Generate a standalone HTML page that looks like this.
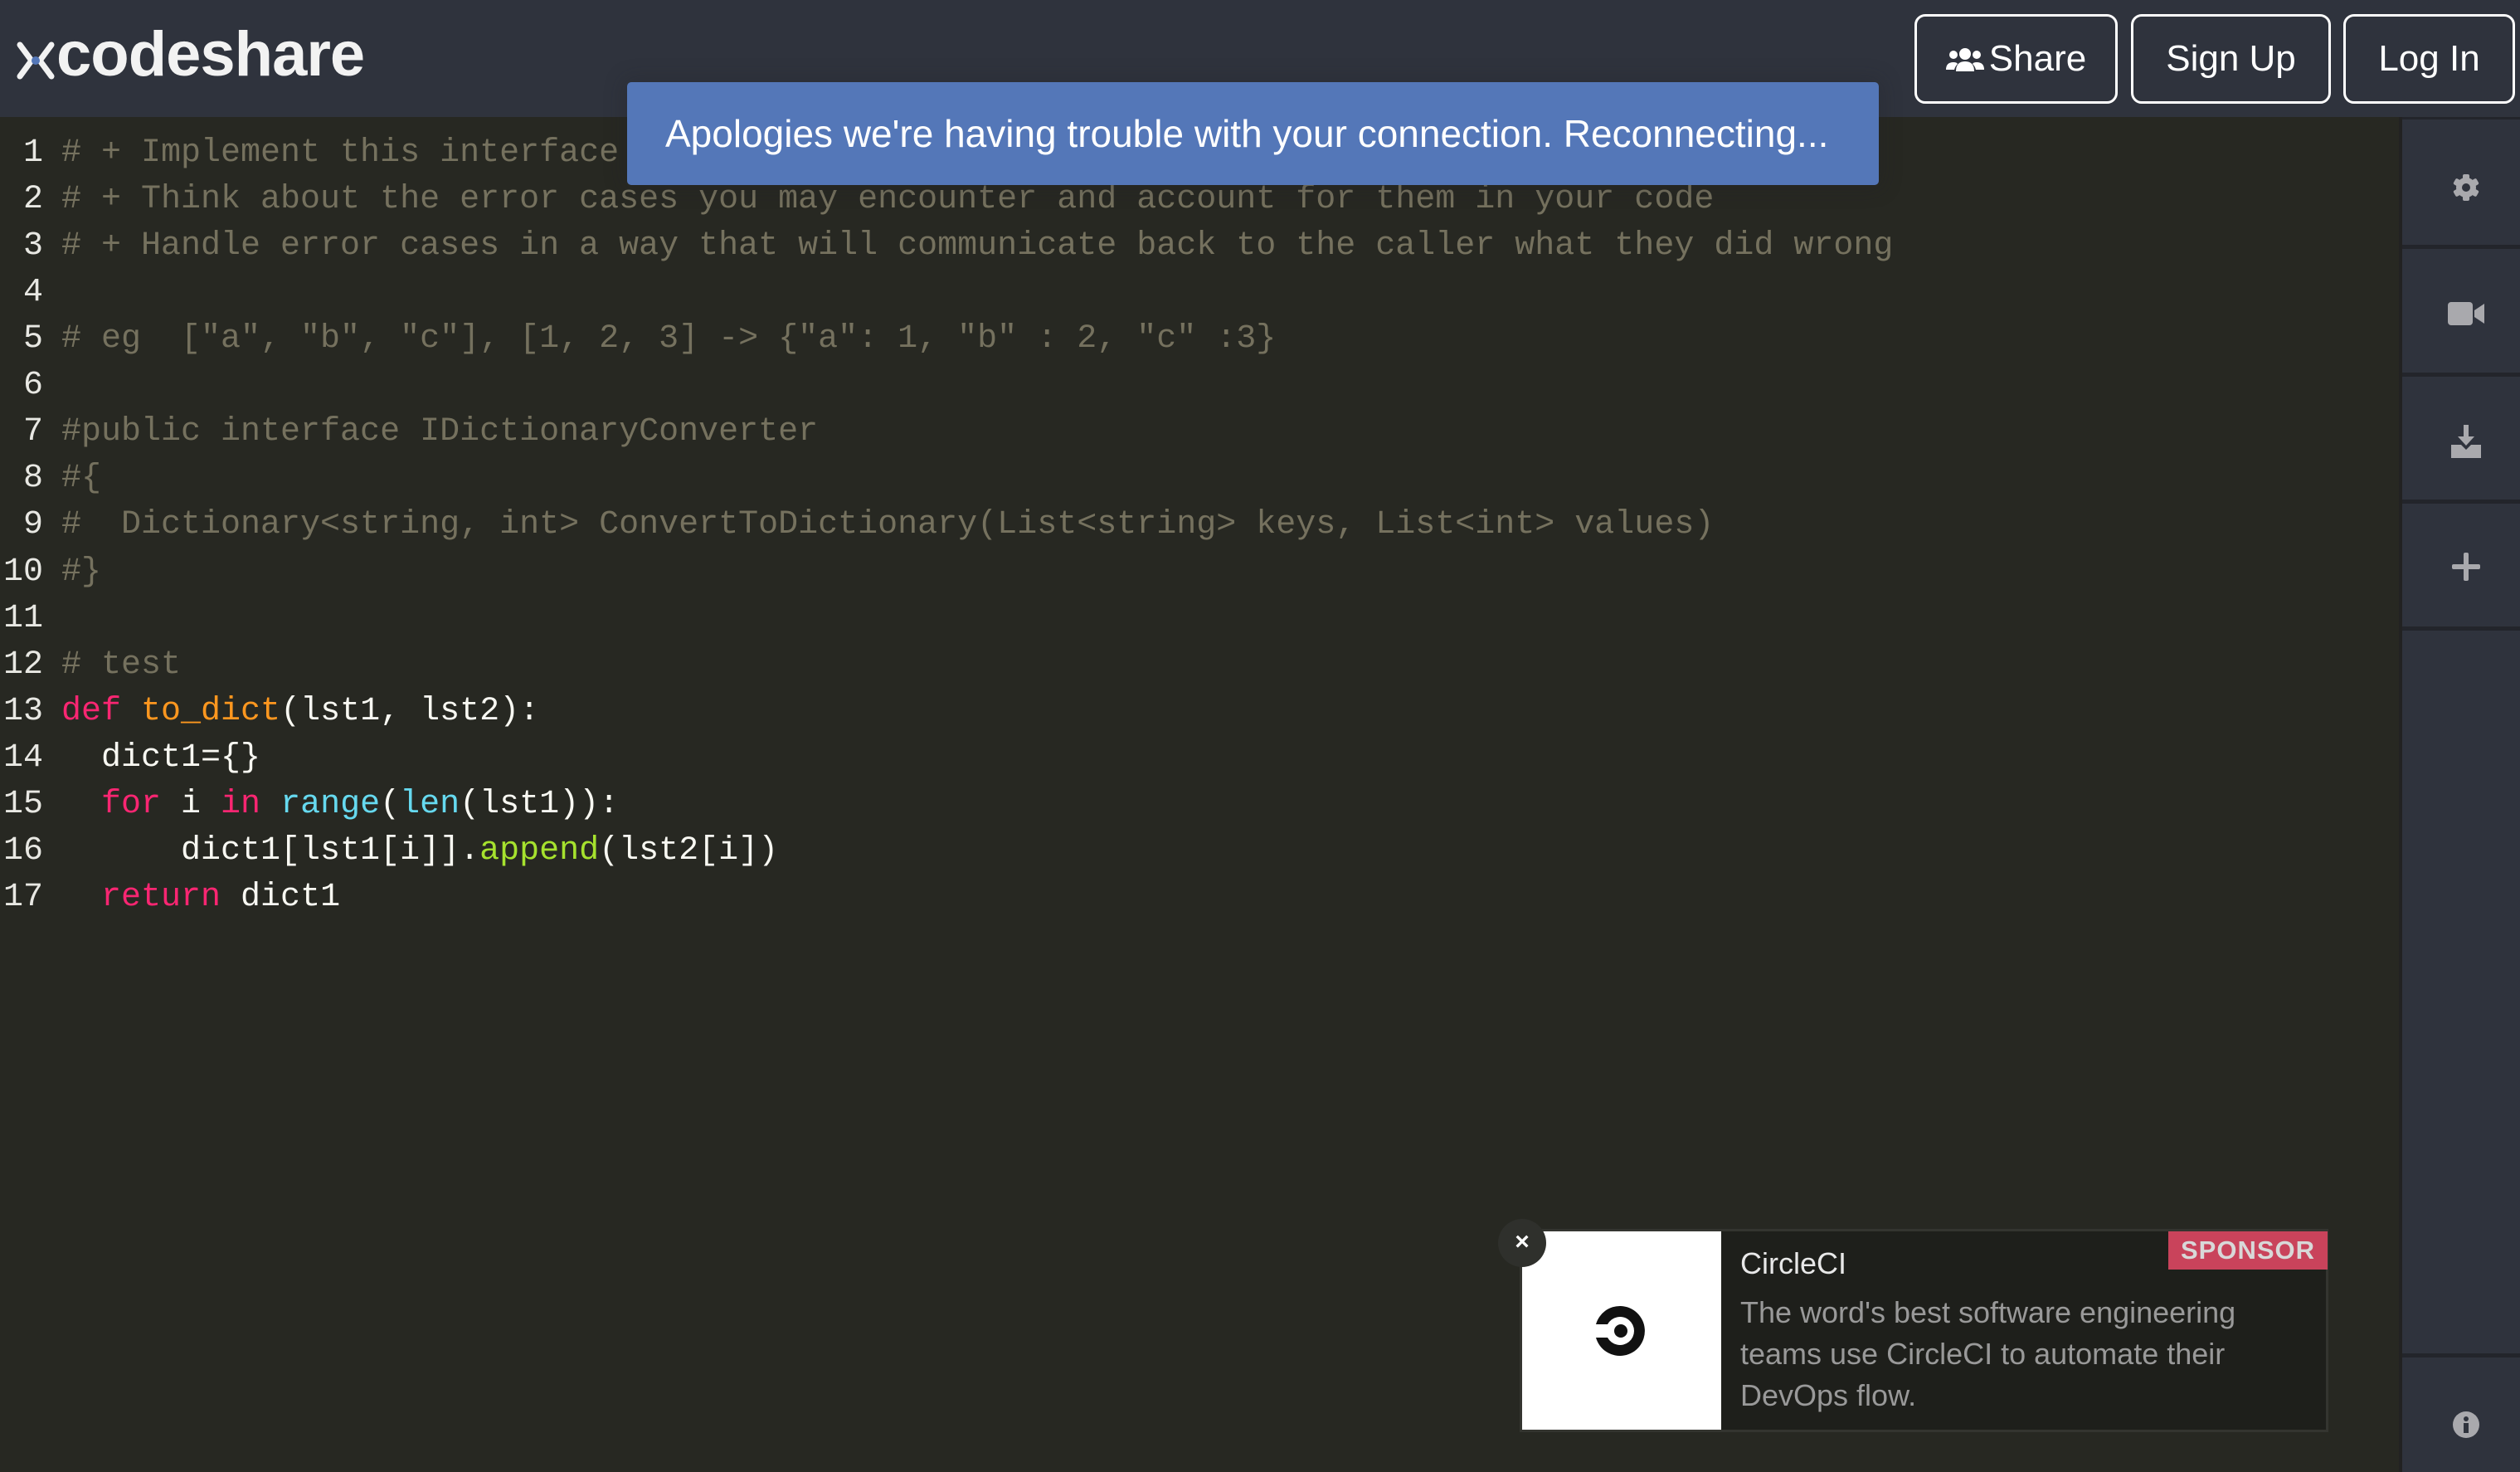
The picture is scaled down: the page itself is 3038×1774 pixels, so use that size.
<!DOCTYPE html>
<html><head><meta charset="utf-8"><style>
*{margin:0;padding:0;box-sizing:border-box}
body{width:3038px;height:1774px;overflow:hidden;background:#272822;position:relative;font-family:"Liberation Sans",sans-serif}
.hdr{position:absolute;left:0;top:0;width:3038px;height:141px;background:#2f333d}
.logo{position:absolute;left:68px;top:22px;font-size:76px;font-weight:bold;color:#f2f2f2;letter-spacing:-1px}
.btn{position:absolute;top:17px;height:108px;border:3px solid #fff;border-radius:13px;color:#fff;font-size:44px;display:flex;align-items:center;justify-content:center}
.alert{position:absolute;left:756px;top:99px;width:1509px;height:124px;background:#5477b8;border-radius:5px;color:#fff;font-size:46px;padding-left:46px;line-height:124px;box-shadow:0 0 24px 4px rgba(30,30,40,.25);z-index:5}
.code{position:absolute;left:0;top:12px;font-family:"Liberation Mono",monospace;font-size:40px;white-space:pre}
.ln{position:absolute;width:52px;text-align:right;left:0;color:#e8e8e3}
.tx{position:absolute;left:74px;color:#f8f8f2}
.c{color:#75715e}.k{color:#f92672}.f{color:#fd971f}.b{color:#66d9ef}.g{color:#a6e22e}
.side{position:absolute;left:2896px;top:141px;width:142px;height:1633px;background:#2f333d}
.sep{position:absolute;left:2896px;width:142px;height:5px;background:#23252b}
.ico{position:absolute;left:2942px;width:62px;display:flex;justify-content:center}
</style></head><body>
<div class="hdr"></div>
<svg style="position:absolute;left:20px;top:50px" width="46" height="46" viewBox="0 0 46 46"><path d="M4 4 L18 23 L4 42 M42 4 L28 23 L42 42" stroke="#f2f2f2" stroke-width="7" fill="none" stroke-linecap="round"/><circle cx="23" cy="23" r="5" fill="#5477b8"/></svg>
<div class="logo">codeshare</div>
<div class="btn" style="left:2308px;width:245px"><svg width="46" height="30" viewBox="0 0 46 30" style="margin-right:6px"><circle cx="23" cy="9" r="7" fill="#fff"/><circle cx="9" cy="10" r="5" fill="#fff"/><circle cx="37" cy="10" r="5" fill="#fff"/><path d="M12 30 q0-12 11-12 q11 0 11 12z M0 28 q0-9 9-9 q4 0 5 2 q-3 3-4 7z M46 28 q0-9-9-9 q-4 0-5 2 q3 3 4 7z" fill="#fff"/></svg>Share</div>
<div class="btn" style="left:2569px;width:241px">Sign Up</div>
<div class="btn" style="left:2825px;width:207px">Log In</div>

<div class="code">
<div class="ln" style="top:150px">1</div><div class="tx c" style="top:150px"># + Implement this interface</div>
<div class="ln" style="top:206px">2</div><div class="tx c" style="top:206px"># + Think about the error cases you may encounter and account for them in your code</div>
<div class="ln" style="top:262px">3</div><div class="tx c" style="top:262px"># + Handle error cases in a way that will communicate back to the caller what they did wrong</div>
<div class="ln" style="top:318px">4</div>
<div class="ln" style="top:374px">5</div><div class="tx c" style="top:374px"># eg  ["a", "b", "c"], [1, 2, 3] -> {"a": 1, "b" : 2, "c" :3}</div>
<div class="ln" style="top:430px">6</div>
<div class="ln" style="top:486px">7</div><div class="tx c" style="top:486px">#public interface IDictionaryConverter</div>
<div class="ln" style="top:542px">8</div><div class="tx c" style="top:542px">#{</div>
<div class="ln" style="top:598px">9</div><div class="tx c" style="top:598px">#  Dictionary&lt;string, int&gt; ConvertToDictionary(List&lt;string&gt; keys, List&lt;int&gt; values)</div>
<div class="ln" style="top:655px">10</div><div class="tx c" style="top:655px">#}</div>
<div class="ln" style="top:711px">11</div>
<div class="ln" style="top:767px">12</div><div class="tx c" style="top:767px"># test</div>
<div class="ln" style="top:823px">13</div><div class="tx" style="top:823px"><span class="k">def</span> <span class="f">to_dict</span>(lst1, lst2):</div>
<div class="ln" style="top:879px">14</div><div class="tx" style="top:879px">  dict1={}</div>
<div class="ln" style="top:935px">15</div><div class="tx" style="top:935px">  <span class="k">for</span> i <span class="k">in</span> <span class="b">range</span>(<span class="b">len</span>(lst1)):</div>
<div class="ln" style="top:991px">16</div><div class="tx" style="top:991px">      dict1[lst1[i]].<span class="g">append</span>(lst2[i])</div>
<div class="ln" style="top:1047px">17</div><div class="tx" style="top:1047px">  <span class="k">return</span> dict1</div>
</div>

<div class="alert">Apologies we're having trouble with your connection. Reconnecting...</div>

<div class="side"></div>
<div class="sep" style="top:141px;height:3px"></div>
<div class="sep" style="top:295px"></div>
<div class="sep" style="top:449px"></div>
<div class="sep" style="top:602px"></div>
<div class="sep" style="top:755px"></div>
<div class="sep" style="top:1631px"></div>
<div style="position:absolute;left:2892px;top:141px;width:4px;height:1633px;background:#222"></div>
<div class="ico" style="top:208px"><svg width="36" height="36" viewBox="0 0 36 36"><g fill="#a9a9ad"><circle cx="18" cy="18" r="12"/><rect x="14" y="2" width="8" height="32" rx="2"/><rect x="14" y="2" width="8" height="32" rx="2" transform="rotate(60 18 18)"/><rect x="14" y="2" width="8" height="32" rx="2" transform="rotate(120 18 18)"/></g><circle cx="18" cy="18" r="5" fill="#2f333d"/></svg></div>
<div class="ico" style="top:364px"><svg width="44" height="28" viewBox="0 0 44 28"><rect x="0" y="0" width="30" height="28" rx="4" fill="#a9a9ad"/><path d="M32 10 L44 2 V26 L32 18z" fill="#a9a9ad"/></svg></div>
<div class="ico" style="top:512px"><svg width="40" height="40" viewBox="0 0 40 40"><path d="M17 0h6v14h7l-10 11-10-11h7z" fill="#a9a9ad"/><path d="M2 24h12l6 6 6-6h12v16H2z" fill="#a9a9ad"/></svg></div>
<div class="ico" style="top:666px"><svg width="34" height="34" viewBox="0 0 34 34"><rect x="14" y="0" width="6" height="34" rx="2" fill="#a9a9ad"/><rect x="0" y="14" width="34" height="6" rx="2" fill="#a9a9ad"/></svg></div>
<div class="ico" style="top:1700px"><svg width="34" height="34" viewBox="0 0 34 34"><circle cx="17" cy="17" r="16" fill="#a9a9ad"/><circle cx="17" cy="10" r="3" fill="#2f333d"/><rect x="14" y="15" width="6" height="12" fill="#2f333d"/></svg></div>

<div style="position:absolute;left:1832px;top:1481px;width:975px;height:245px;background:#1e1f1b;border:3px solid #343530"></div>
<div style="position:absolute;left:1835px;top:1484px;width:240px;height:239px;background:#fff"></div>
<svg style="position:absolute;left:1922px;top:1572px" width="64" height="64" viewBox="0 0 64 64"><path d="M32 2 A30 30 0 1 1 2 40 H16 A17 17 0 1 0 16 24 H2 A30 30 0 0 1 32 2z" fill="#111"/><circle cx="32" cy="32" r="8" fill="#111"/></svg>
<div style="position:absolute;left:1806px;top:1469px;width:58px;height:58px;border-radius:50%;background:#2f302c;color:#fff;font-size:30px;font-weight:bold;text-align:center;line-height:56px">×</div>
<div style="position:absolute;left:2614px;top:1484px;width:192px;height:46px;background:#c9435b;color:#d8d8d8;font-size:31px;font-weight:bold;text-align:center;line-height:46px;letter-spacing:1px">SPONSOR</div>
<div style="position:absolute;left:2098px;top:1502px;color:#e8e8e8;font-size:36px">CircleCI</div>
<div style="position:absolute;left:2098px;top:1557px;width:640px;color:#999;font-size:36px;line-height:50px">The word's best software engineering teams use CircleCI to automate their DevOps flow.</div>
</body></html>
